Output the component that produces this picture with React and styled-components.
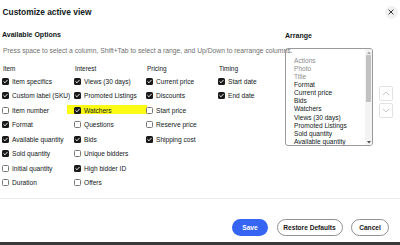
import React from 'react';
import styled, { createGlobalStyle } from 'styled-components';

const Global = createGlobalStyle`
  html, body { margin: 0; padding: 0; background: #fff; }
  body { font-family: "Liberation Sans", Arial, sans-serif; color: #111820; }
  * { box-sizing: border-box; }
`;

const Page = styled.div`
  width: 400px;
  height: 245px;
  overflow: hidden;
  display: flex;
  flex-direction: column;
  background: #fff;
`;

const Header = styled.div`
  height: 24px;
  flex: none;
  display: flex;
  align-items: center;
  justify-content: space-between;
  padding: 0 2.5px 0 2.5px;
`;

const Title = styled.h1`
  margin: 0;
  font-size: 8.4px;
  line-height: 9px;
  font-weight: 700;
`;

const CloseButton = styled.button`
  width: 13px;
  height: 13px;
  border-radius: 50%;
  border: none;
  background: #f1f1f1;
  padding: 0;
  display: flex;
  align-items: center;
  justify-content: center;
`;

const Main = styled.div`
  height: 174px;
  flex: none;
  display: flex;
`;

const Left = styled.section`
  width: 285px;
  padding-left: 2px;
  padding-top: 6px;
  display: flex;
  flex-direction: column;
`;

const SectionTitle = styled.h2`
  margin: 0;
  font-size: 7px;
  line-height: 9px;
  font-weight: 700;
  white-space: nowrap;
`;

const Hint = styled.p`
  margin: 8px 0 0 1px;
  font-size: 6.75px;
  line-height: 8px;
  color: #707070;
  white-space: nowrap;
`;

const Columns = styled.div`
  margin-top: 9.5px;
  display: grid;
  grid-template-columns: 72px 72px 72px auto;
`;

const Column = styled.div`
  display: flex;
  flex-direction: column;
`;

const ColumnHead = styled.div`
  font-size: 6.4px;
  line-height: 8px;
  padding-left: 1px;
  margin-bottom: 1.25px;
  white-space: nowrap;
`;

const Row = styled.label`
  position: relative;
  height: 14.5px;
  display: flex;
  align-items: center;
  gap: 3px;
  font-size: 6.6px;
  white-space: nowrap;
  z-index: 0;
  ${(p) =>
    p.$marked &&
    `
    &::before {
      content: "";
      position: absolute;
      left: -7px;
      right: -1px;
      top: 2px;
      height: 9px;
      background: #fbfb14;
      z-index: -1;
    }
  `}
`;

const Box = styled.span`
  width: 7px;
  height: 7px;
  flex: none;
  border-radius: 1.5px;
  display: flex;
  align-items: center;
  justify-content: center;
  background: ${(p) => (p.$checked ? '#191919' : '#fff')};
  border: ${(p) => (p.$checked ? 'none' : '0.8px solid #7a7a7a')};
`;

const Right = styled.section`
  flex: 1;
  padding-top: 6.5px;
  display: flex;
  flex-direction: column;
`;

const ArrangeRow = styled.div`
  margin-top: 8.5px;
  display: flex;
  gap: 6px;
  align-items: flex-start;
`;

const ListBox = styled.div`
  width: 88px;
  height: 98px;
  border: 1px solid #9a9a9a;
  border-radius: 3px;
  display: flex;
  overflow: hidden;
`;

const ListItems = styled.ul`
  flex: 1;
  margin: 0;
  list-style: none;
  padding: 7.5px 0 0 8px;
  overflow: hidden;
`;

const ListItem = styled.li`
  font-size: 6.6px;
  line-height: 8.15px;
  white-space: nowrap;
  color: ${(p) => (p.$muted ? '#8c8c8c' : '#111820')};
`;

const ScrollTrack = styled.div`
  width: 7px;
  flex: none;
  background: #f3f3f3;
  display: flex;
  flex-direction: column;
  align-items: center;
`;

const ScrollArrow = styled.div`
  height: 6px;
  flex: none;
  display: flex;
  align-items: center;
  justify-content: center;
`;

const ScrollThumb = styled.div`
  width: 5px;
  height: 47px;
  background: #c1c1c1;
  border-radius: 1px;
`;

const ScrollSpace = styled.div`
  flex: 1;
`;

const MoveButtons = styled.div`
  margin-top: 38px;
  display: flex;
  flex-direction: column;
  gap: 2px;
`;

const MoveButton = styled.button`
  width: 14px;
  height: 15px;
  padding: 0;
  border: 1px solid #e2e2e2;
  border-radius: 2px;
  background: #fff;
  display: flex;
  align-items: center;
  justify-content: center;
`;

const Footer = styled.div`
  height: 44px;
  flex: none;
  border-top: 1px solid #ececec;
  display: flex;
  justify-content: flex-end;
  align-items: flex-start;
  gap: 8.5px;
  padding: 20px 11px 0 0;
`;

const Button = styled.button`
  height: 17px;
  width: ${(p) => p.$w}px;
  padding: 0;
  border-radius: 9px;
  font-family: "Liberation Sans", Arial, sans-serif;
  font-size: 6.6px;
  font-weight: 700;
  color: ${(p) => (p.$primary ? '#fff' : '#191919')};
  background: ${(p) => (p.$primary ? '#3665f3' : '#fff')};
  border: ${(p) => (p.$primary ? 'none' : '0.8px solid #8f8f8f')};
`;

const BottomBar = styled.div`
  flex: 1;
  background: #3a3a3a;
`;

const CheckIcon = () => (
  <svg width="5" height="5" viewBox="0 0 10 10">
    <path d="M1.5 5.2 L4 7.6 L8.6 2.4" fill="none" stroke="#fff" strokeWidth="1.8" strokeLinecap="round" strokeLinejoin="round" />
  </svg>
);

const Check = ({ label, checked, marked }) => (
  <Row $marked={marked}>
    <Box $checked={checked}>{checked && <CheckIcon />}</Box>
    {label}
  </Row>
);

const columns = [
  {
    head: 'Item',
    items: [
      ['Item specifics', true],
      ['Custom label (SKU)', true],
      ['Item number', false],
      ['Format', true],
      ['Available quantity', true],
      ['Sold quantity', true],
      ['Initial quantity', false],
      ['Duration', false],
    ],
  },
  {
    head: 'Interest',
    items: [
      ['Views (30 days)', true],
      ['Promoted Listings', true],
      ['Watchers', true, true],
      ['Questions', false],
      ['Bids', true],
      ['Unique bidders', false],
      ['High bidder ID', true],
      ['Offers', false],
    ],
  },
  {
    head: 'Pricing',
    items: [
      ['Current price', true],
      ['Discounts', true],
      ['Start price', false],
      ['Reserve price', false],
      ['Shipping cost', true],
    ],
  },
  {
    head: 'Timing',
    items: [
      ['Start date', true],
      ['End date', true],
    ],
  },
];

const arrange = [
  ['Actions', true],
  ['Photo', true],
  ['Title', true],
  ['Format'],
  ['Current price'],
  ['Bids'],
  ['Watchers'],
  ['Views (30 days)'],
  ['Promoted Listings'],
  ['Sold quantity'],
  ['Available quantity'],
];

export default function App() {
  return (
    <>
      <Global />
      <Page>
        <Header>
          <Title>Customize active view</Title>
          <CloseButton aria-label="Close">
            <svg width="6" height="6" viewBox="0 0 10 10">
              <path d="M1.5 1.5 L8.5 8.5 M8.5 1.5 L1.5 8.5" stroke="#222" strokeWidth="1.5" strokeLinecap="round" />
            </svg>
          </CloseButton>
        </Header>
        <Main>
          <Left>
            <SectionTitle>Available Options</SectionTitle>
            <Hint>Press space to select a column, Shift+Tab to select a range, and Up/Down to rearrange columns.</Hint>
            <Columns>
              {columns.map((c) => (
                <Column key={c.head}>
                  <ColumnHead>{c.head}</ColumnHead>
                  {c.items.map(([label, checked, marked]) => (
                    <Check key={label} label={label} checked={checked} marked={marked} />
                  ))}
                </Column>
              ))}
            </Columns>
          </Left>
          <Right>
            <SectionTitle>Arrange</SectionTitle>
            <ArrangeRow>
              <ListBox>
                <ListItems>
                  {arrange.map(([label, muted]) => (
                    <ListItem key={label} $muted={muted}>{label}</ListItem>
                  ))}
                </ListItems>
                <ScrollTrack>
                  <ScrollArrow>
                    <svg width="4" height="3" viewBox="0 0 4 3"><path d="M0 3 L2 0.5 L4 3 Z" fill="#a3a3a3" /></svg>
                  </ScrollArrow>
                  <ScrollThumb />
                  <ScrollSpace />
                  <ScrollArrow>
                    <svg width="4" height="3" viewBox="0 0 4 3"><path d="M0 0 L2 2.5 L4 0 Z" fill="#505050" /></svg>
                  </ScrollArrow>
                </ScrollTrack>
              </ListBox>
              <MoveButtons>
                <MoveButton aria-label="Move up">
                  <svg width="8" height="5" viewBox="0 0 8 5"><path d="M0.8 4.2 L4 1 L7.2 4.2" fill="none" stroke="#c4c4c4" strokeWidth="0.9" /></svg>
                </MoveButton>
                <MoveButton aria-label="Move down">
                  <svg width="8" height="5" viewBox="0 0 8 5"><path d="M0.8 0.8 L4 4 L7.2 0.8" fill="none" stroke="#c4c4c4" strokeWidth="0.9" /></svg>
                </MoveButton>
              </MoveButtons>
            </ArrangeRow>
          </Right>
        </Main>
        <Footer>
          <Button $primary $w={36}>Save</Button>
          <Button $w={66}>Restore Defaults</Button>
          <Button $w={38}>Cancel</Button>
        </Footer>
        <BottomBar />
      </Page>
    </>
  );
}
